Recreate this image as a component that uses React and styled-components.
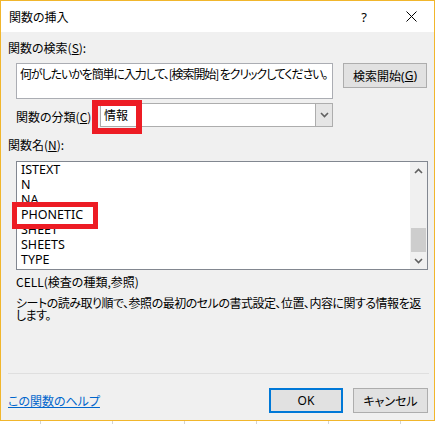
import styled, { createGlobalStyle } from "styled-components";

const GlobalStyle = createGlobalStyle`
  html, body {
    margin: 0;
    padding: 0;
    background: #ffffff;
  }
  body {
    font-family: "Noto Sans CJK JP", "Noto Sans", sans-serif;
    font-size: 12px;
    color: #000;
    font-feature-settings: "palt";
  }
`;

const Window = styled.div`
  position: relative;
  width: 435px;
  height: 421px;
  box-sizing: border-box;
  border: 1px solid #f1b62c;
  background: #f0f0f0;
  display: flex;
  flex-direction: column;
`;

const TitleBar = styled.div`
  height: 31px;
  flex-shrink: 0;
  background: #ffffff;
  display: flex;
  align-items: center;
  padding-left: 8px;
  font-size: 12px;
`;

const TitleText = styled.div`
  flex: 1;
`;

const HelpMark = styled.div`
  width: 20px;
  text-align: center;
  font-family: "Noto Sans", sans-serif;
  font-size: 13px;
  margin-right: 31px;
`;

const CloseButton = styled.div`
  width: 12px;
  height: 12px;
  margin-right: 17px;
  display: flex;
  align-items: center;
  justify-content: center;
`;

const Body = styled.div`
  flex: 1;
  display: flex;
  flex-direction: column;
  padding: 0 6px 0 7px;
`;

const Label = styled.div`
  line-height: 16px;
  margin-top: ${(p) => p.$top}px;
`;

const Row = styled.div`
  display: flex;
  align-items: flex-start;
  margin-left: 8px;
  margin-top: ${(p) => p.$top}px;
`;

const SearchBox = styled.div`
  width: 317px;
  height: 36px;
  box-sizing: border-box;
  border: 1px solid #abadb3;
  background: #fff;
  padding: 2px 3px;
  line-height: 16px;
  letter-spacing: -1.1px;
  white-space: nowrap;
  overflow: hidden;
`;

const Button = styled.div`
  width: ${(p) => p.$w}px;
  height: 25px;
  box-sizing: border-box;
  border: ${(p) => (p.$primary ? "2px solid #0078d7" : "1px solid #adadad")};
  background: #e1e1e1;
  display: flex;
  align-items: center;
  justify-content: center;
  margin-left: ${(p) => p.$gap || 0}px;
  font-family: "Noto Sans", "Noto Sans CJK JP", sans-serif;
`;

const CategoryLabel = styled.div`
  width: 84px;
  line-height: 16px;
  margin-top: 6px;
`;

const Combo = styled.div`
  width: 233px;
  height: 24px;
  box-sizing: border-box;
  border: 1px solid #adadad;
  background: #fff;
  display: flex;
`;

const ComboValue = styled.div`
  flex: 1;
  padding-left: 3px;
  line-height: 22px;
`;

const ComboArrow = styled.div`
  width: 16px;
  border-left: 1px solid #adadad;
  background: #e5e5e5;
  display: flex;
  align-items: center;
  justify-content: center;
`;

const ListBox = styled.div`
  width: 412px;
  height: 109px;
  box-sizing: border-box;
  border: 1px solid #828790;
  background: #fff;
  display: flex;
  margin-left: 8px;
  margin-top: 8px;
`;

const Items = styled.div`
  flex: 1;
  overflow: hidden;
  padding-left: 4px;
  font-family: "Noto Sans", "Noto Sans CJK JP", sans-serif;
  font-size: 12.5px;
`;

const Item = styled.div`
  height: 15px;
  line-height: 15px;
`;

const ScrollBar = styled.div`
  width: 17px;
  background: #f0f0f0;
  display: flex;
  flex-direction: column;
`;

const ScrollArrow = styled.div`
  height: 17px;
  display: flex;
  align-items: center;
  justify-content: center;
`;

const Track = styled.div`
  flex: 1;
  display: flex;
  flex-direction: column;
  justify-content: flex-end;
  align-items: center;
`;

const Thumb = styled.div`
  width: 15px;
  height: 24px;
  background: #cdcdcd;
`;

const Description = styled.div`
  margin-left: 8px;
  margin-top: 4px;
  width: 412px;
`;

const Syntax = styled.div`
  line-height: 16px;
`;

const Explain = styled.div`
  line-height: 12px;
  margin-top: 7px;
  letter-spacing: -0.5px;
`;

const Separator = styled.div`
  height: 1px;
  background: #dfdfdf;
  margin-top: auto;
  margin-right: -1px;
`;

const Footer = styled.div`
  display: flex;
  align-items: center;
  margin-top: 14px;
  margin-bottom: 7px;
`;

const HelpLink = styled.a`
  color: #0066cc;
  text-decoration: underline;
  flex: 1;
  cursor: pointer;
`;

const Highlight = styled.div`
  position: absolute;
  left: ${(p) => p.$x}px;
  top: ${(p) => p.$y}px;
  width: ${(p) => p.$w}px;
  height: ${(p) => p.$h}px;
  box-sizing: border-box;
  border: ${(p) => p.$t}px solid #ed1c24;
  pointer-events: none;
`;

const SheetGrid = styled.div`
  height: 3px;
  width: 435px;
  background-color: #fff;
  background-image: linear-gradient(to right, #d4d4d4 1px, transparent 1px);
  background-size: 72px 100%;
  background-position: 40px 0;
`;

const Chevron = ({ up }) => (
  <svg width="9" height="6" viewBox="0 0 9 6">
    <path
      d={up ? "M1 5 L4.5 1.5 L8 5" : "M1 1 L4.5 4.5 L8 1"}
      fill="none"
      stroke="#606060"
      strokeWidth="1.6"
    />
  </svg>
);

const items = ["ISTEXT", "N", "NA", "PHONETIC", "SHEET", "SHEETS", "TYPE"];

export default function App() {
  return (
    <>
      <GlobalStyle />
      <Window>
        <TitleBar>
          <TitleText>関数の挿入</TitleText>
          <HelpMark>?</HelpMark>
          <CloseButton>
            <svg width="11" height="11" viewBox="0 0 11 11">
              <path d="M0.5 0.5 L10.5 10.5 M10.5 0.5 L0.5 10.5" stroke="#000" strokeWidth="1" />
            </svg>
          </CloseButton>
        </TitleBar>
        <Body>
          <Label $top={8}>
            関数の検索(<u>S</u>):
          </Label>
          <Row $top={7}>
            <SearchBox>何がしたいかを簡単に入力して、[検索開始] をクリックしてください。</SearchBox>
            <Button $w={84} $gap={10}>
              検索開始(<u>G</u>)
            </Button>
          </Row>
          <Row $top={4}>
            <CategoryLabel>
              関数の分類(<u>C</u>)
            </CategoryLabel>
            <Combo>
              <ComboValue>情報</ComboValue>
              <ComboArrow>
                <Chevron />
              </ComboArrow>
            </Combo>
          </Row>
          <Label $top={10}>
            関数名(<u>N</u>):
          </Label>
          <ListBox>
            <Items>
              {items.map((name) => (
                <Item key={name}>{name}</Item>
              ))}
            </Items>
            <ScrollBar>
              <ScrollArrow>
                <Chevron up />
              </ScrollArrow>
              <Track>
                <Thumb />
              </Track>
              <ScrollArrow>
                <Chevron />
              </ScrollArrow>
            </ScrollBar>
          </ListBox>
          <Description>
            <Syntax>CELL(検査の種類,参照)</Syntax>
            <Explain>
              シートの読み取り順で、参照の最初のセルの書式設定、位置、内容に関する情報を返します。
            </Explain>
          </Description>
          <Separator />
          <Footer>
            <HelpLink>この関数のヘルプ</HelpLink>
            <Button $w={74} $primary>
              OK
            </Button>
            <Button $w={75} $gap={10}>
              キャンセル
            </Button>
          </Footer>
        </Body>
        <Highlight $x={91} $y={99} $w={50} $h={34} $t={6} />
        <Highlight $x={11} $y={201} $w={86} $h={27} $t={5} />
      </Window>
      <SheetGrid />
    </>
  );
}
